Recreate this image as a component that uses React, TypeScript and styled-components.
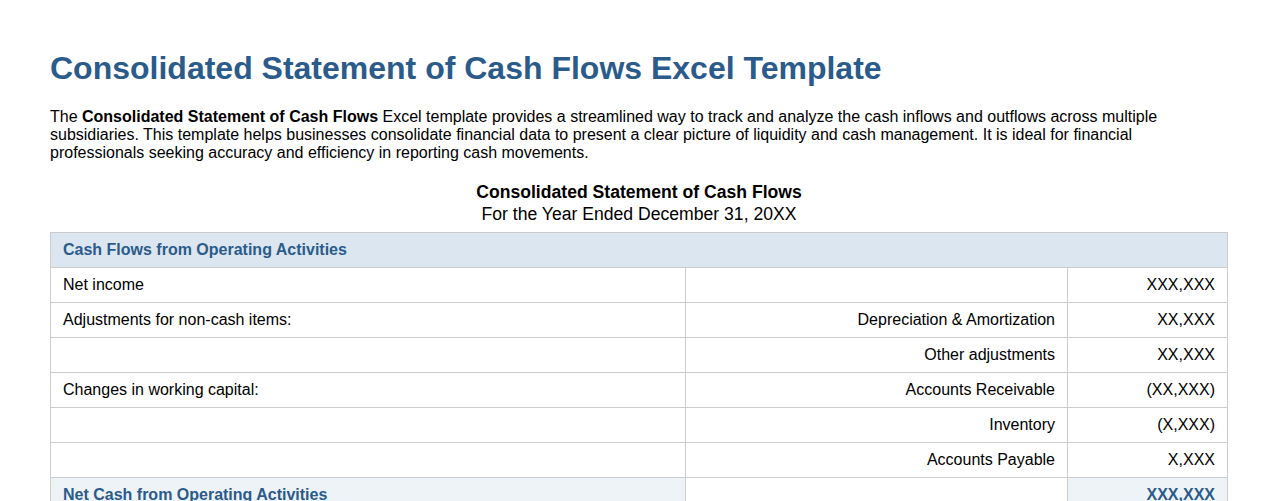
import { type FC } from 'react';
import styled, { createGlobalStyle } from 'styled-components';

const GlobalStyle = createGlobalStyle`
  body {
    margin: 0;
    background: #ffffff;
    font-family: "Liberation Sans", Arial, sans-serif;
    color: #000;
  }
`;

const Page = styled.div`
  padding: 0 50px;
`;

const Title = styled.h1`
  margin: 50px 0 22px;
  font-size: 32px;
  line-height: 36px;
  font-weight: 700;
  color: #2b5b8a;
`;

const Intro = styled.p`
  margin: 0 0 19px;
  font-size: 16px;
  line-height: 18px;
`;

const Strong = styled.strong`
  font-weight: 700;
`;

const Caption = styled.div`
  text-align: center;
  margin-bottom: 7px;
`;

const CaptionTitle = styled.div`
  font-size: 17.6px;
  line-height: 22px;
  font-weight: 700;
`;

const CaptionSub = styled.div`
  font-size: 17.6px;
  line-height: 22px;
`;

const Table = styled.table`
  width: 100%;
  border-collapse: collapse;
  font-size: 16px;
  line-height: 18px;
`;

const SectionCell = styled.td`
  background: #dce6f1;
  color: #2b5b8a;
  font-weight: 700;
  padding: 8px 12px;
  border: 1px solid #cccccc;
`;

const Cell = styled.td<{ $align?: 'left' | 'right'; $total?: boolean }>`
  padding: 8px 12px;
  border: 1px solid #cccccc;
  text-align: ${(p) => p.$align ?? 'left'};
  background: ${(p) => (p.$total ? '#eef3f8' : '#ffffff')};
  color: ${(p) => (p.$total ? '#2b5b8a' : '#000')};
  font-weight: ${(p) => (p.$total ? 700 : 400)};
`;

const rows = [
  { label: 'Net income', item: '', amount: 'XXX,XXX' },
  { label: 'Adjustments for non-cash items:', item: 'Depreciation & Amortization', amount: 'XX,XXX' },
  { label: '', item: 'Other adjustments', amount: 'XX,XXX' },
  { label: 'Changes in working capital:', item: 'Accounts Receivable', amount: '(XX,XXX)' },
  { label: '', item: 'Inventory', amount: '(X,XXX)' },
  { label: '', item: 'Accounts Payable', amount: 'X,XXX' },
];

const App: FC = () => (
  <>
    <GlobalStyle />
    <Page>
      <Title>Consolidated Statement of Cash Flows Excel Template</Title>
      <Intro>
        The <Strong>Consolidated Statement of Cash Flows</Strong> Excel template provides a streamlined
        way to track and analyze the cash inflows and outflows across multiple subsidiaries. This
        template helps businesses consolidate financial data to present a clear picture of liquidity
        and cash management. It is ideal for financial professionals seeking accuracy and efficiency
        in reporting cash movements.
      </Intro>
      <Caption>
        <CaptionTitle>Consolidated Statement of Cash Flows</CaptionTitle>
        <CaptionSub>For the Year Ended December 31, 20XX</CaptionSub>
      </Caption>
      <Table>
        <colgroup>
          <col style={{ width: 635 }} />
          <col style={{ width: 382 }} />
          <col />
        </colgroup>
        <tbody>
          <tr>
            <SectionCell colSpan={3}>Cash Flows from Operating Activities</SectionCell>
          </tr>
          {rows.map((r, i) => (
            <tr key={i}>
              <Cell>{r.label}</Cell>
              <Cell $align="right">{r.item}</Cell>
              <Cell $align="right">{r.amount}</Cell>
            </tr>
          ))}
          <tr>
            <Cell $total>Net Cash from Operating Activities</Cell>
            <Cell />
            <Cell $total $align="right">XXX,XXX</Cell>
          </tr>
        </tbody>
      </Table>
    </Page>
  </>
);

export default App;
